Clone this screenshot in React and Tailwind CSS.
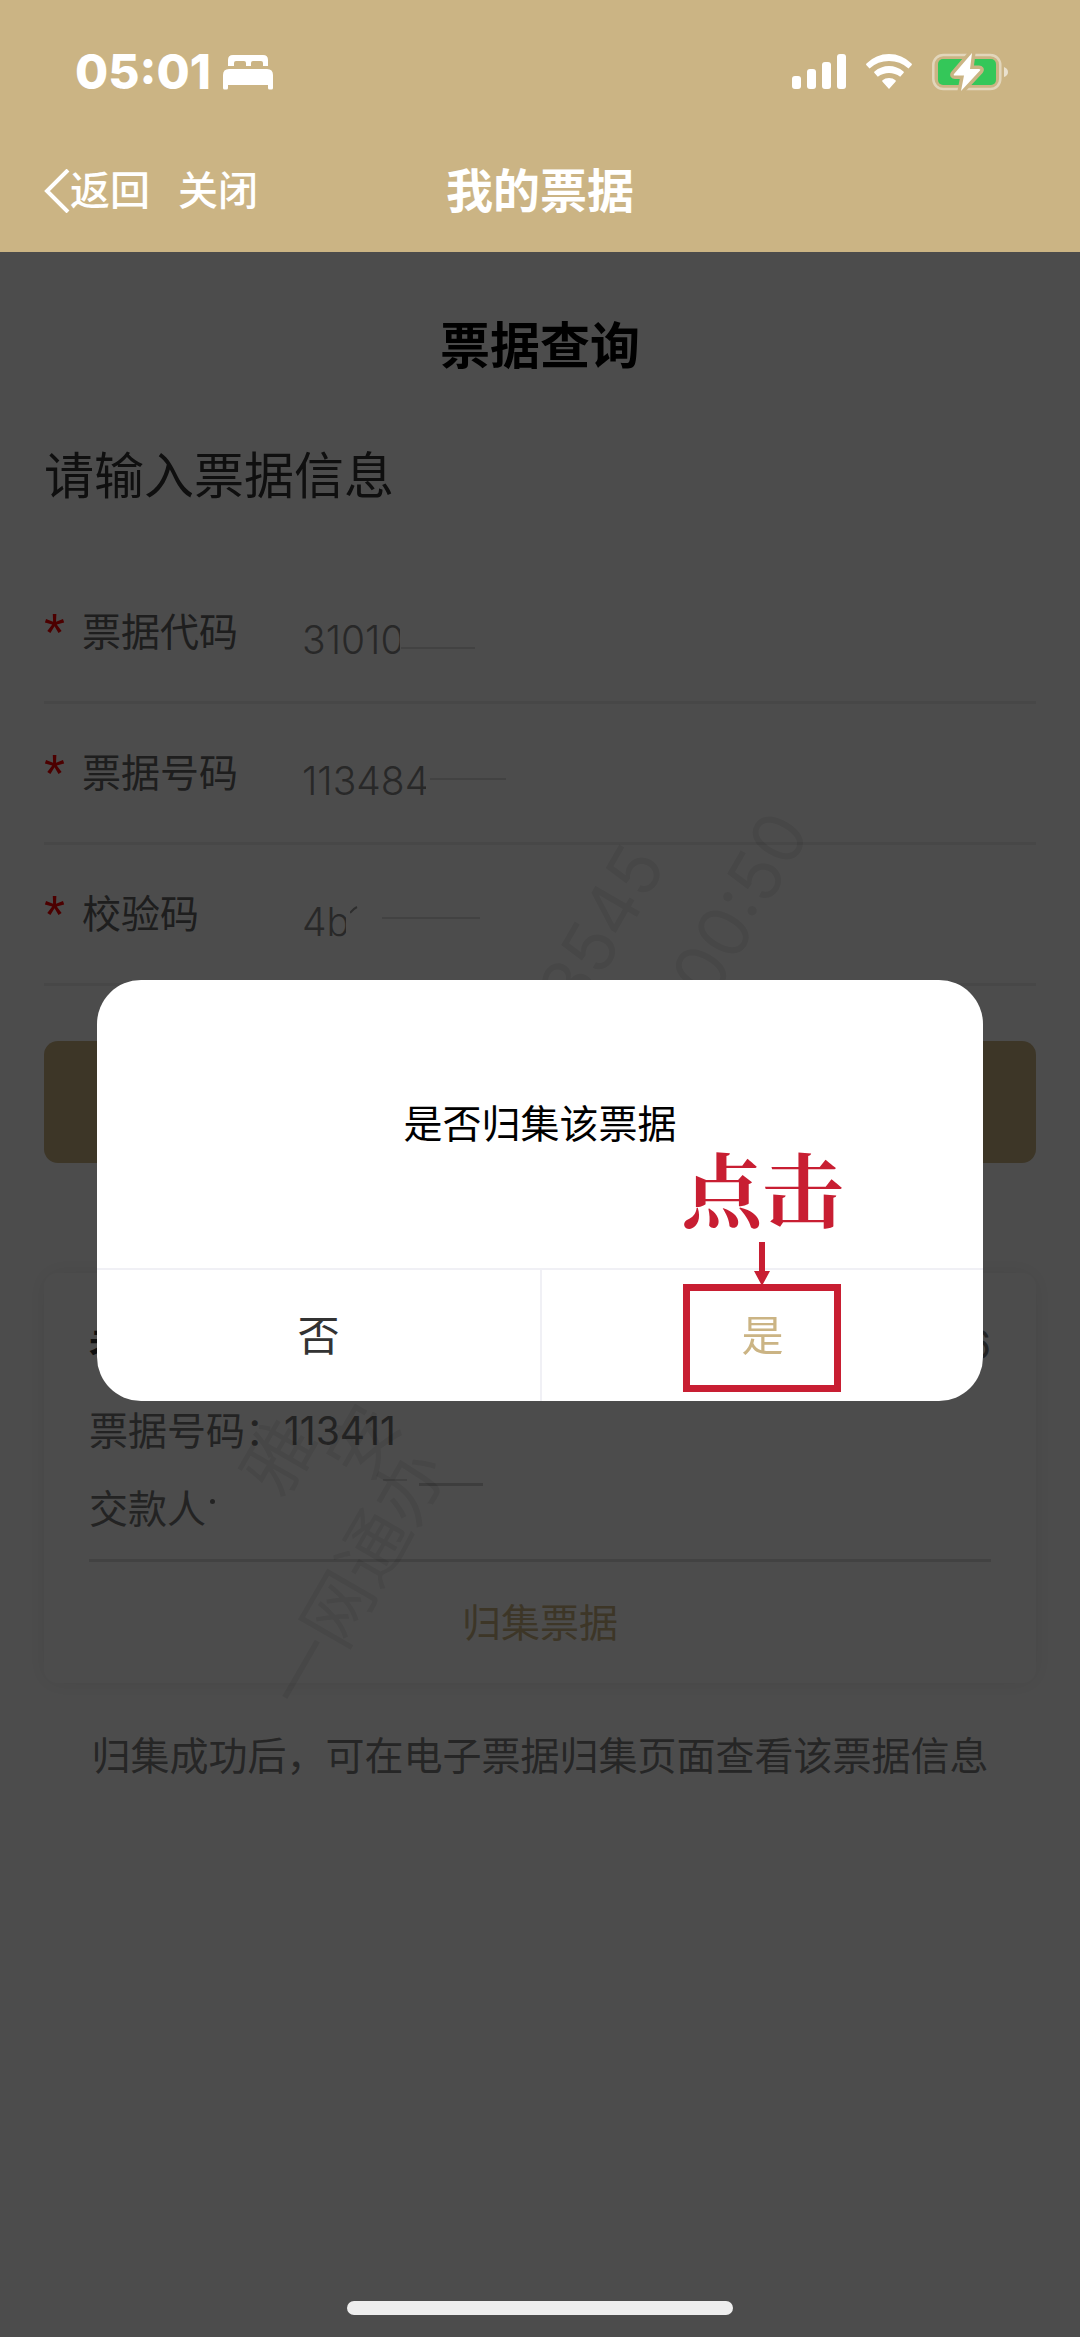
import { useState } from "react";

const fields = [
  { id: "code", label: "票据代码", width: "w-[98px]", dash: "mt-8 ml-px w-[74px]" },
  { id: "number", label: "票据号码", width: "w-[124px]", dash: "mt-3 ml-1 w-[76px]" },
  { id: "check", label: "校验码", width: "w-[44px]", dash: "mt-2 ml-6 w-[98px]", tick: true },
];

// background watermark, tilted text scattered behind the page
const watermarks = [
  { text: "3545", left: 588, top: 1022 },
  { text: "00:50", left: 721, top: 1008 },
  { text: "一网通办", left: 316, top: 1719 },
  { text: "雅", left: 292, top: 1506 },
  { text: "安", left: 376, top: 1490 },
];

const BedIcon = () => (
  <svg className="w-[50px] h-9" viewBox="0 0 50 36" fill="#fff" aria-hidden="true">
    <path d="M5 12V6q0-5 5-5h30q5 0 5 5v6h-5V9q0-2-2-2h-8q-2 0-2 2v3h-5V9q0-2-2-2h-8q-2 0-2 2v3z" />
    <path d="M0 34V21q0-6 6-6h38q6 0 6 6v13q0 1.500-1.500 1.500h-2q-1.500 0-1.500-1.500v-3H5v3q0 1.500-1.500 1.500h-2Q0 35.500 0 34z" />
  </svg>
);

const SignalIcon = () => (
  <svg className="w-[54px] h-9" viewBox="0 0 54 36" fill="#fff" aria-hidden="true">
    <rect x="0" y="22" width="9" height="13" rx="3" />
    <rect x="15" y="15" width="9" height="20" rx="3" />
    <rect x="30" y="8" width="9" height="27" rx="3" />
    <rect x="45" y="0" width="9" height="35" rx="3" />
  </svg>
);

const WifiIcon = () => (
  <svg className="w-[46px] h-9" viewBox="0 0 46 36" fill="#fff" aria-hidden="true">
    <path d="M23 0Q36 0 45.500 9.500q.8.900 0 1.700l-3 3.200Q34 7 23 7T3.500 14.400l-3-3.200q-.8-.8 0-1.700Q10 0 23 0z" />
    <path d="M23 12q8 0 14.500 5.500.9.800 0 1.600l-3.300 3.600Q29 19 23 19t-11.200 3.700l-3.300-3.600q-.9-.8 0-1.600Q15 12 23 12z" />
    <path d="M23 24q4 0 6.500 2.200.8.700 0 1.500L23 35l-6.500-7.300q-.8-.8 0-1.500Q19 24 23 24z" />
  </svg>
);

const BatteryIcon = () => (
  <svg className="w-[76px] h-10" viewBox="0 0 76 40" aria-hidden="true">
    <rect x="1.300" y="3" width="67" height="34" rx="10" fill="none" stroke="#fff" strokeOpacity="0.450" strokeWidth="2.500" />
    <path d="M72 15q4 1.500 4 5t-4 5z" fill="#fff" fillOpacity="0.600" />
    <rect x="6" y="7" width="58" height="26" rx="5" fill="#34c759" />
    <path d="M40 1 22 22q-1 1.500 1 1.500h9L29 39 48 18.500q1-1.500-1-1.500h-9z" fill="#fff" stroke="#cbb484" strokeWidth="7" strokeLinejoin="round" />
    <path d="M40 1 22 22q-1 1.500 1 1.500h9L29 39 48 18.500q1-1.500-1-1.500h-9z" fill="#fff" />
  </svg>
);

const Field = ({ id, label, value, width, dash, tick, onChange }) => (
  <div className="flex h-[141px] items-center border-b-3 border-[#ededed]">
    <label htmlFor={id} className="flex w-[258px] items-center text-[39px] text-[#666]">
      <span className="w-[38px] font-['Liberation_Sans',sans-serif] text-[54px] leading-[60px] text-[#f00]">
        *
      </span>
      {label}
    </label>
    <input
      id={id}
      value={value}
      onChange={onChange}
      className={`${width} mt-4 bg-transparent text-[39px] font-light text-[#888] outline-none`}
    />
    {/* leftovers of the masked value */}
    {tick && (
      <svg className="mb-2 ml-1 h-2 w-2" viewBox="0 0 8 8" fill="none" stroke="#999" strokeWidth="2" aria-hidden="true">
        <path d="M0 7q3-4 7-6" />
      </svg>
    )}
    <span className={`${dash} h-[2px] bg-[#ddd]`} />
  </div>
);

export default function App() {
  const [form, setForm] = useState({ code: "31010", number: "113484", check: "4b" });
  const [open, setOpen] = useState(true);

  const handleChange = (e) => setForm((f) => ({ ...f, [e.target.id]: e.target.value }));

  return (
    <div className="flex min-h-screen flex-col bg-white font-['Inter','Noto_Sans_CJK_SC',sans-serif]">
      {/* Header */}
      <header className="relative z-20 h-[252px] bg-[#cbb484] text-white">
        <div className="flex h-[144px] items-center justify-between pr-[72px] pl-[75px]">
          <div className="flex items-center gap-3">
            <span className="text-[48px] leading-[60px] font-extrabold">05:01</span>
            <BedIcon />
          </div>
          <div className="flex items-center gap-5">
            <SignalIcon />
            <WifiIcon />
            <BatteryIcon />
          </div>
        </div>
        <nav className="grid h-[94px] grid-cols-3 items-center pl-11">
          <div className="flex items-center gap-7 text-[40px] font-medium">
            <button type="button" className="flex items-center">
              <svg className="h-11 w-[26px]" viewBox="0 0 26 44" fill="none" stroke="#fff" strokeWidth="4" aria-hidden="true">
                <path d="M24 1 3 22l21 21" />
              </svg>
              返回
            </button>
            <button type="button">关闭</button>
          </div>
          <h1 className="-ml-11 text-center text-[47px] font-bold">我的票据</h1>
        </nav>
      </header>

      <main className="relative flex-1 px-11 pt-16">
        <h2 className="text-center text-[50px] leading-[60px] font-bold text-black">票据查询</h2>
        <p className="mt-[70px] text-[50px] leading-[60px] text-[#333]">请输入票据信息</p>

        {/* Form */}
        <form className="mt-[57px]" onSubmit={(e) => e.preventDefault()}>
          {fields.map((f) => (
            <Field key={f.id} {...f} value={form[f.id]} onChange={handleChange} />
          ))}
          <button
            type="submit"
            aria-label="查询"
            className="mt-[55px] block h-[122px] w-full rounded-[14px] bg-[#cbb484]"
          />
        </form>

        {/* Result card */}
        <section className="mt-[110px] rounded-[14px] px-[45px] pt-[42px] text-[39px] leading-[60px] text-[#777] shadow-[0_0_24px_rgba(0,0,0,0.08)]">
          <div className="flex justify-between">
            <span className="font-bold text-[#333]">老</span>
            <span>6</span>
          </div>
          <p className="mt-[26px]">票据号码：113411</p>
          <div className="mt-[18px] flex">
            交款人
            <span className="mt-5 ml-1 h-[5px] w-[5px] rounded-full bg-[#777]" />
            <span className="ml-[168px] h-[2px] w-6 bg-[#ddd]" />
            <span className="mt-1 ml-3 h-[3px] w-16 bg-[#ccc]" />
          </div>
          <button
            type="button"
            onClick={() => setOpen(true)}
            className="mt-5 block h-[124px] w-full border-t-3 border-[#ddd] text-[#cbb484]"
          >
            归集票据
          </button>
        </section>

        <p className="mt-[43px] text-center text-[39px] leading-[60px] text-[#808080]">
          归集成功后，可在电子票据归集页面查看该票据信息
        </p>
      </main>

      {/* Watermark */}
      <div aria-hidden="true" className="pointer-events-none absolute inset-0 overflow-hidden">
        {watermarks.map((w) => (
          <span
            key={w.text}
            className="absolute origin-bottom-left -translate-y-full -rotate-60 text-[71px] leading-none text-black/7"
            style={{ left: w.left, top: w.top }}
          >
            {w.text}
          </span>
        ))}
      </div>

      {/* Confirm dialog */}
      {open && (
        <div className="fixed inset-0 z-10 flex items-center justify-center bg-black/70 pt-11">
          <div role="dialog" aria-label="是否归集该票据" className="w-[82%] rounded-[44px] bg-white">
            <p className="flex h-[288px] items-center justify-center text-[39px] text-black">是否归集该票据</p>
            <div className="grid h-[133px] grid-cols-2 border-t-2 border-[#f0f0f5] text-[42px]">
              <button type="button" onClick={() => setOpen(false)} className="text-[#333]">
                否
              </button>
              <button
                type="button"
                onClick={() => setOpen(false)}
                className="relative border-l-2 border-[#f0f0f5] text-[#cbb484]"
              >
                是
                {/* click hint */}
                <span className="absolute bottom-[9px] left-1/2 flex -translate-x-1/2 flex-col items-center text-[#c81e32]">
                  <span className="font-['Noto_Serif_CJK_SC','Noto_Sans_CJK_SC',serif] text-[81px] leading-[88px] font-bold whitespace-nowrap">
                    点击
                  </span>
                  <svg className="mt-3 h-[42px] w-4" viewBox="0 0 16 42" fill="currentColor" aria-hidden="true">
                    <path d="M5 0h6v29h5L9 42H7L0 29h5z" />
                  </svg>
                  <span className="h-[108px] w-[158px] border-7 border-[#c81e32]" />
                </span>
              </button>
            </div>
          </div>
        </div>
      )}

      {/* Home indicator */}
      <div className="fixed bottom-[22px] left-1/2 z-20 h-[14px] w-[386px] -translate-x-1/2 rounded-full bg-[#eee]" />
    </div>
  );
}
